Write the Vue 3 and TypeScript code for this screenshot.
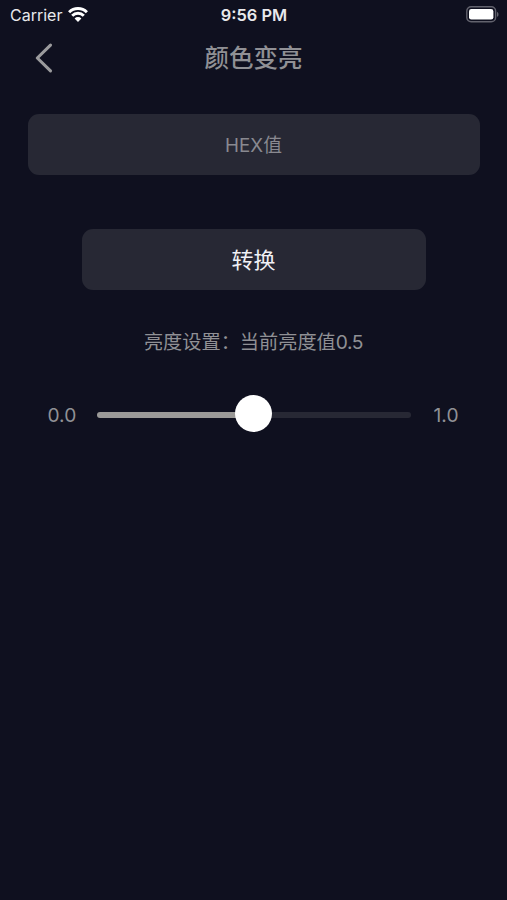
<script setup lang="ts">
import { computed, ref } from 'vue'

const hex = ref('')
const brightness = ref(0.5)

const label = computed(() => Number(brightness.value).toFixed(1))
const fill = computed(() => `${Number(brightness.value) * 100}%`)

function convert(): void {
  const match = /^#?([0-9a-f]{6})$/i.exec(hex.value.trim())
  if (!match) return
  const channels = match[1].match(/../g) as string[]
  const lighter = channels.map((c) => {
    const value = parseInt(c, 16)
    return Math.round(value + (255 - value) * Number(brightness.value)).toString(16).padStart(2, '0')
  })
  hex.value = `#${lighter.join('')}`
}
</script>

<template>
  <main class="screen">
    <header class="status">
      <div class="carrier">
        <span>Carrier</span>
        <svg class="wifi" viewBox="0 0 20 15" width="20" height="15">
          <path d="M1.1 5.2a12.7 12.7 0 0 1 17.8 0M4.2 8.7a8.3 8.3 0 0 1 11.6 0" fill="none" stroke="#fff" stroke-width="3" />
          <path d="M6.6 11.5a4.8 4.8 0 0 1 6.8 0L10 14.9z" fill="#fff" />
        </svg>
      </div>
      <span class="time">9:56 PM</span>
      <svg class="battery" viewBox="0 0 33 17" width="33" height="17">
        <rect x="0.8" y="0.8" width="28.8" height="15" rx="4.3" fill="none" stroke="#62626d" stroke-width="1.4" />
        <rect x="3" y="3" width="24.4" height="10.6" rx="2.4" fill="#fff" />
        <path d="M31 6v4.8c2-.6 2-4.2 0-4.8z" fill="#62626d" />
      </svg>
    </header>
    <nav class="navbar">
      <button class="back" type="button" aria-label="返回">
        <svg viewBox="0 0 18 30" width="18" height="30">
          <path d="M15.5 2.2 2.3 15l13.2 12.8" fill="none" stroke="#9b9b9d" stroke-width="3.1" stroke-linecap="round" stroke-linejoin="round" />
        </svg>
      </button>
      <h1 class="title">颜色变亮</h1>
    </nav>
    <input v-model="hex" class="field" type="text" placeholder="HEX值" />
    <button class="convert" type="button" @click="convert">转换</button>
    <p class="caption">亮度设置：当前亮度值<span class="value">{{ label }}</span></p>
    <div class="slider">
      <span class="bound">0.0</span>
      <input v-model="brightness" class="range" type="range" min="0" max="1" step="0.1" :style="{ '--fill': fill }" />
      <span class="bound end">1.0</span>
    </div>
  </main>
</template>

<style>
body {
  background: #0f101f;
}
</style>

<style scoped>
.screen {
  box-sizing: border-box;
  width: 100%;
  height: 900px;
  display: flex;
  flex-direction: column;
  align-items: center;
  overflow: hidden;
  background: #0f101f;
  color: #909095;
  font-family: Inter, "Noto Sans CJK SC", sans-serif;
}
.status {
  box-sizing: border-box;
  width: 100%;
  height: 30px;
  padding: 0 8px 0 10px;
  display: grid;
  grid-template-columns: 1fr auto 1fr;
  align-items: center;
  color: #e9e9ec;
  font-size: 16px;
  line-height: 30px;
}
.carrier {
  display: flex;
  align-items: center;
  gap: 6px;
}
.wifi {
  margin-top: -1px;
}
.time {
  padding-right: 1px;
  font-size: 16.4px;
  font-weight: 600;
}
.battery {
  justify-self: end;
  margin-top: -1px;
}
.navbar {
  box-sizing: border-box;
  width: 100%;
  height: 56px;
  padding: 0 35px;
  display: grid;
  grid-template-columns: 18px 1fr 18px;
  align-items: center;
}
.back {
  display: flex;
  padding: 0;
  border: 0;
  background: none;
}
.title {
  margin: 0;
  text-align: center;
  font-size: 24.5px;
  line-height: 36px;
  font-weight: 500;
}
.field,
.convert {
  box-sizing: border-box;
  border: 0;
  border-radius: 11px;
  outline: none;
  background: #272834;
  text-align: center;
  font-family: inherit;
}
.field {
  width: 452px;
  height: 61px;
  margin-top: 28px;
  padding: 2px 0 0;
  color: #929298;
  font-size: 18.8px;
}
.field::placeholder {
  color: #898990;
  opacity: 1;
}
.convert {
  width: 344px;
  height: 61px;
  margin-top: 54px;
  padding: 0 0 4px;
  color: #f0f0f5;
  font-size: 22px;
}
.caption {
  margin: 38px 0 0;
  font-size: 19.2px;
  line-height: 28px;
}
.value {
  letter-spacing: -0.4px;
}
.slider {
  display: flex;
  align-items: center;
  margin-top: 39px;
  height: 40px;
}
.bound {
  box-sizing: border-box;
  width: 49px;
  font-size: 19.2px;
}
.end {
  padding-right: 1px;
  text-align: right;
}
.range {
  width: 314px;
  height: 38px;
  margin: 0;
  background: none;
  appearance: none;
  outline: none;
}
.range::-webkit-slider-runnable-track {
  height: 6px;
  border-radius: 3px;
  background: linear-gradient(to right, #9b9a98 var(--fill), #272834 var(--fill));
}
.range::-webkit-slider-thumb {
  appearance: none;
  width: 37px;
  height: 37px;
  margin-top: -17px;
  border-radius: 50%;
  background: #fff;
}
</style>
